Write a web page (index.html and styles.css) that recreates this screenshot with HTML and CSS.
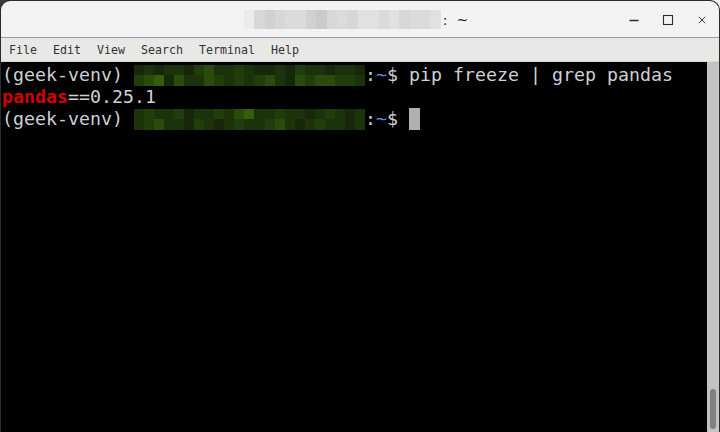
FILE: index.html
```html
<!DOCTYPE html>
<html lang="en">
<head>
<meta charset="utf-8">
<title>Terminal</title>
<link rel="stylesheet" href="styles.css">
</head>
<body>
<div class="window">
  <header class="titlebar">
    <div class="title">
      <div class="title-mosaic">
        <i class="t1"></i><i class="t4"></i><i class="t5"></i><i class="t4"></i><i class="t3"></i><i class="t3"></i><i class="t5"></i><i class="t6"></i><i class="t4"></i><i class="t3"></i><i class="t4"></i><i class="t2"></i><i class="t2"></i><i class="t3"></i><i class="t2"></i><i class="t4"></i><i class="t3"></i><i class="t3"></i><i class="t2"></i>
      </div>
      <span class="title-text">:</span><span class="title-text tilde">~</span>
    </div>
    <div class="controls">
      <span class="ctl"><svg width="12" height="12" viewBox="0 0 12 12"><path d="M1.5 6.5h9" stroke="#2b2b2b" stroke-width="1.3" fill="none"/></svg></span>
      <span class="ctl"><svg width="12" height="12" viewBox="0 0 12 12"><rect x="1.5" y="1.5" width="9" height="9" stroke="#2b2b2b" stroke-width="1.1" fill="none"/></svg></span>
      <span class="ctl"><svg width="12" height="12" viewBox="0 0 12 12"><path d="M2.8 2.8l6.4 6.4M9.2 2.8l-6.4 6.4" stroke="#3a3a3a" stroke-width="1" fill="none"/></svg></span>
    </div>
  </header>
  <nav class="menubar">
    <span>File</span><span>Edit</span><span>View</span><span>Search</span><span>Terminal</span><span>Help</span>
  </nav>
  <main class="term">
    <div class="screen">
      <div class="line">
        <span>(geek-venv) </span>
        <div class="mosaic">
          <i class="g2"></i><i class="g3"></i><i class="g2"></i><i class="g3"></i><i class="g3"></i><i class="g2"></i><i class="g4"></i><i class="g5"></i><i class="g3"></i><i class="g3"></i><i class="g4"></i><i class="g3"></i><i class="g2"></i><i class="g2"></i><i class="g3"></i><i class="g2"></i><i class="g4"></i><i class="g3"></i><i class="g3"></i><i class="g2"></i><i class="g3"></i><i class="g3"></i><i class="g2"></i>
          <i class="g4"></i><i class="g5"></i><i class="g6"></i><i class="g2"></i><i class="g5"></i><i class="g3"></i><i class="g3"></i><i class="g5"></i><i class="g4"></i><i class="g3"></i><i class="g4"></i><i class="g3"></i><i class="g4"></i><i class="g5"></i><i class="g3"></i><i class="g2"></i><i class="g5"></i><i class="g4"></i><i class="g5"></i><i class="g5"></i><i class="g4"></i><i class="g4"></i><i class="g3"></i>
        </div>
        <span>:</span><span class="dir">~</span><span>$ pip freeze | grep pandas</span>
      </div>
      <div class="line">
        <span class="match">pandas</span><span>==0.25.1</span>
      </div>
      <div class="line">
        <span>(geek-venv) </span>
        <div class="mosaic">
          <i class="g3"></i><i class="g4"></i><i class="g3"></i><i class="g3"></i><i class="g4"></i><i class="g2"></i><i class="g3"></i><i class="g3"></i><i class="g4"></i><i class="g3"></i><i class="g5"></i><i class="g6"></i><i class="g3"></i><i class="g3"></i><i class="g4"></i><i class="g3"></i><i class="g3"></i><i class="g2"></i><i class="g3"></i><i class="g4"></i><i class="g3"></i><i class="g2"></i><i class="g3"></i>
          <i class="g3"></i><i class="g4"></i><i class="g5"></i><i class="g3"></i><i class="g3"></i><i class="g2"></i><i class="g4"></i><i class="g3"></i><i class="g2"></i><i class="g3"></i><i class="g4"></i><i class="g3"></i><i class="g3"></i><i class="g4"></i><i class="g5"></i><i class="g3"></i><i class="g2"></i><i class="g3"></i><i class="g4"></i><i class="g3"></i><i class="g3"></i><i class="g2"></i><i class="g3"></i>
        </div>
        <span>:</span><span class="dir">~</span><span>$ </span><span class="cursor"></span>
      </div>
    </div>
    <div class="scrollbar"><div class="thumb"></div></div>
  </main>
</div>
</body>
</html>
```
FILE: styles.css
```css
* { box-sizing: border-box; }
html, body { margin: 0; padding: 0; height: 100%; }
body {
  background: linear-gradient(90deg, #3a3a3a 0 50%, #f4f4f4 50% 100%);
  overflow: hidden;
}
.window {
  width: 720px;
  height: 432px;
  border: 1px solid #2a2a2a;
  border-bottom: 0;
  border-radius: 10px 10px 0 0;
  overflow: hidden;
  display: flex;
  flex-direction: column;
  background: #000;
}
.titlebar {
  flex: none;
  height: 37px;
  background: #f3f3f3;
  border-bottom: 1px solid #9a9a9a;
  display: grid;
  grid-template-columns: 1fr auto 1fr;
  align-items: center;
}
.title {
  grid-column: 2;
  display: flex;
  align-items: center;
  margin-right: 8px;
  margin-top: 1px;
}
.title-mosaic {
  display: grid;
  grid-template-columns: repeat(19, 1fr);
  width: 197px;
  height: 19px;
}
.title-mosaic i { display: block; }
.t1 { background: #ebebea; }
.t2 { background: #e1e1e0; }
.t3 { background: #dadbda; }
.t4 { background: #d6d7d6; }
.t5 { background: #d1d2d0; }
.t6 { background: #c9cbcb; }
.title-text {
  font: 14px/1 "DejaVu Sans", sans-serif;
  color: #303030;
  margin-left: 2px;
}
.tilde { margin-left: 9px; }
.controls {
  grid-column: 3;
  justify-self: end;
  display: flex;
}
.ctl {
  width: 34px;
  height: 36px;
  display: flex;
  align-items: center;
  justify-content: center;
  padding-top: 2px;
}
.ctl svg { display: block; }
.menubar {
  flex: none;
  height: 24px;
  padding-top: 2px;
  background: #e8e8e7;
  border-bottom: 1px solid #d8d8d6;
  display: flex;
  align-items: center;
  font: 11.63px/1 "DejaVu Sans Mono", monospace;
  color: #333;
}
.menubar span { padding: 0 8px; }
.term {
  flex: 1;
  min-height: 0;
  display: flex;
}
.screen {
  flex: 1;
  padding: 2px 0 0 1px;
  font: 18.27px/22px "DejaVu Sans Mono", monospace;
  color: #cdd1d4;
}
.line {
  display: flex;
  height: 22px;
  white-space: pre;
}
.dir { color: #5c8fd1; }
.match { color: #d40000; font-weight: bold; }
.cursor {
  display: block;
  width: 11px;
  height: 22px;
  background: #b0b0b0;
}
.mosaic {
  display: grid;
  grid-template-columns: repeat(23, 1fr);
  grid-template-rows: 1fr 1fr;
  width: 231px;
  height: 21px;
  align-self: center;
}
.mosaic i { display: block; }
.g1 { background: #121e08; }
.g2 { background: #172709; }
.g3 { background: #1c320b; }
.g4 { background: #223d0c; }
.g5 { background: #2a4b0c; }
.g6 { background: #335f0b; }
.scrollbar {
  flex: none;
  width: 12px;
  background: #c3c3c1;
  display: flex;
  flex-direction: column;
  justify-content: flex-end;
  padding: 0 3px 3px 3px;
}
.thumb {
  height: 40px;
  background: #7f807f;
  border-radius: 3px;
}
```
